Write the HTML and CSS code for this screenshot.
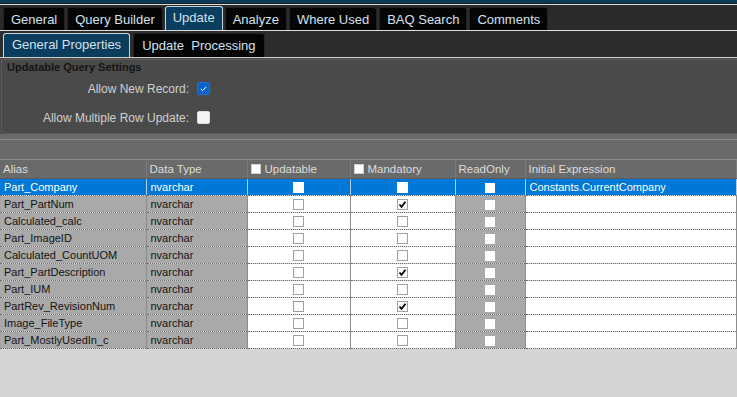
FILE: index.html
```html
<!DOCTYPE html>
<html lang="en">
<head>
  <meta charset="UTF-8" />
  <title>BAQ Designer - Update</title>
  <link rel="stylesheet" href="styles.css">
</head>
<body>

  <div class="topbar"></div>

  <div class="tabs">
    <span class="tab">General</span>
    <span class="tab">Query Builder</span>
    <span class="tab active">Update</span>
    <span class="tab">Analyze</span>
    <span class="tab">Where Used</span>
    <span class="tab">BAQ Search</span>
    <span class="tab">Comments</span>
  </div>

  <div class="subtabs">
    <span class="tab active">General Properties</span>
    <span class="tab">Update&nbsp; Processing</span>
  </div>

  <div class="panel">
    <div class="group">
      <div class="group-title">Updatable Query Settings</div>
      <div class="opt">
        <span class="opt-label">Allow New Record:</span>
        <span class="cb cb-on"><svg width="11" height="11" viewBox="0 0 11 11"><path d="M2.8 5.8 L4.7 7.6 L8.3 3.8" fill="none" stroke="#fff" stroke-width="1"/></svg></span>
      </div>
      <div class="opt">
        <span class="opt-label">Allow Multiple Row Update:</span>
        <span class="cb"></span>
      </div>
    </div>
  </div>

  <div class="strip"></div>

  <table class="grid">
    <colgroup>
      <col style="width:146px"><col style="width:101px"><col style="width:103px">
      <col style="width:105px"><col style="width:70px"><col>
    </colgroup>
    <thead>
      <tr>
        <th>Alias</th>
        <th>Data Type</th>
        <th><span class="hbox"></span>Updatable</th>
        <th><span class="hbox"></span>Mandatory</th>
        <th>ReadOnly</th>
        <th>Initial Expression</th>
      </tr>
    </thead>
    <tbody id="rows"></tbody>
  </table>

  <div class="rest"></div>

  <script>
    const fields = [
      ["Part_Company", false, "Constants.CurrentCompany"],
      ["Part_PartNum", true, ""],
      ["Calculated_calc", false, ""],
      ["Part_ImageID", false, ""],
      ["Calculated_CountUOM", false, ""],
      ["Part_PartDescription", true, ""],
      ["Part_IUM", false, ""],
      ["PartRev_RevisionNum", true, ""],
      ["Image_FileType", false, ""],
      ["Part_MostlyUsedIn_c", false, ""]
    ];
    const tick = '<svg width="9" height="9" viewBox="0 0 9 9"><path d="M1.5 4.5 L3.5 6.8 L7.5 1.8" fill="none" stroke="#000" stroke-width="1.8"/></svg>';
    const body = document.getElementById("rows");
    fields.forEach((f, i) => {
      const sel = i === 0 ? ' class="sel"' : "";
      body.innerHTML += `<tr${sel}><td class="ro">${f[0]}</td><td class="ro">nvarchar</td>`
        + `<td class="c"><span class="box"></span></td>`
        + `<td class="c"><span class="box">${f[1] ? tick : ""}</span></td>`
        + `<td class="c ro"><span class="wbox"></span></td><td>${f[2]}</td></tr>`;
    });
  </script>
</body>
</html>
```

FILE: styles.css
```css
body { margin: 0; background: #d4d4d4; font-family: "Liberation Sans", Arial, sans-serif; width: 737px; overflow: hidden; }

.topbar { height: 3px; background: #0c3a5b; border-bottom: 1px solid #1c1c1c; }

.tabs { display: flex; gap: 2px; padding: 2px 0 0 3px; height: 23px; background: #2b2b2b; border-top: 1px solid #dcdcdc; border-bottom: 1px solid #dcdcdc; }
.subtabs { display: flex; gap: 3px; padding: 2px 0 0 3px; height: 24px; background: #2d2d2d; border-bottom: 1px solid #cfcfcf; }

.tab { display: flex; align-items: center; padding: 0 7px; font-size: 13px; color: #d3e1ee; background: #050505; border: 1px solid #222; border-bottom: none; border-radius: 3px 3px 0 0; }
.tabs .tab.active { margin-top: -1px; padding-bottom: 3px; background: #0b3d5f; border-color: #c8d6e2; }
.subtabs .tab { padding: 0 8px; }
.subtabs .tab.active { background: #0b3d5f; border-color: #c8d6e2; padding-bottom: 2px; }

.panel { background: #4a4a4a; padding-top: 1px; }
.group { height: 73px; margin-left: 1px; border: 1px solid #5c5c5c; border-right: none; border-radius: 4px 0 0 4px; background: #4a4a4a; }
.group-title { height: 14px; font-size: 11px; font-weight: bold; color: #141414; padding: 0 0 0 5px; line-height: 14px; }
.opt { display: flex; align-items: center; height: 29px; }
.opt-label { width: 195px; box-sizing: border-box; padding-right: 8px; text-align: right; font-size: 12px; color: #d0d0d0; }
.cb { display: inline-block; width: 11px; height: 11px; background: #f4f4f4; border: 1px solid #ddd; border-radius: 2px; }
.cb-on { background: #0a63c9; border-color: #1a6fd0; }
.cb svg { display: block; }

.strip { height: 26px; background: linear-gradient(#6a6a6a 0 5px, #858585 5px 6px, #6a6a6a 6px 25px, #8a8a8a 25px); }

.grid { width: 737px; table-layout: fixed; border-collapse: collapse; font-size: 11px; }
.grid th { height: 18px; padding: 0 0 0 3px; text-align: left; font-weight: normal; font-size: 11.5px; color: #dcdcdc; background: #6a6a6a; border-right: 1px solid #7c7c7c; border-bottom: 1px solid #5a5a5a; white-space: nowrap; }
.grid td { height: 16px; padding: 0 0 0 4px; color: #141414; background: #fff; border-right: 1px solid #8c8c8c; border-bottom: 1px dotted #6e6e6e; white-space: nowrap; overflow: hidden; }
.grid td.ro { background: #a9a9a9; }
.grid td.c { padding: 0; text-align: center; }
.grid tr.sel td { background: #0078d7; color: #fff; border-right: 1px dotted #9cc4ea; }

.hbox { display: inline-block; width: 10px; height: 10px; margin-right: 4px; vertical-align: -1px; background: #fff; border: 1px solid #d0d0d0; box-sizing: border-box; }
.box { display: inline-block; width: 11px; height: 11px; vertical-align: middle; border: 1px solid #a0a0a0; box-sizing: border-box; background: #fff; }
.box svg { display: block; }
.wbox { display: inline-block; width: 10px; height: 10px; vertical-align: middle; background: #fff; }
.sel .box { border-color: #fff; }

.rest { height: 60px; background: #d4d4d4; }
```
